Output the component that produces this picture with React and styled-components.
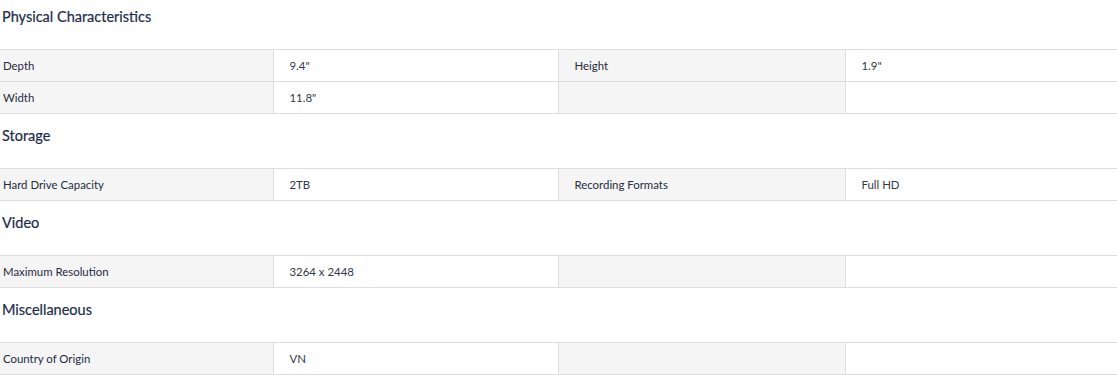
import styled, { createGlobalStyle } from "styled-components";

const GlobalStyle = createGlobalStyle`
  body {
    margin: 0;
    background: #fff;
    font-family: "Lato", "Liberation Sans", sans-serif;
  }
`;

const specs = [
  {
    title: "Physical Characteristics",
    rows: [
      ["Depth", "9.4\"", "Height", "1.9\""],
      ["Width", "11.8\"", "", ""],
    ],
  },
  {
    title: "Storage",
    rows: [["Hard Drive Capacity", "2TB", "Recording Formats", "Full HD"]],
  },
  {
    title: "Video",
    rows: [["Maximum Resolution", "3264 x 2448", "", ""]],
  },
  {
    title: "Miscellaneous",
    rows: [["Country of Origin", "VN", "", ""]],
  },
];

const App = () => {
  return (
    <>
      <GlobalStyle />
      <Wrapper>
        {specs.map((group) => (
          <Section key={group.title}>
            <Title>{group.title}</Title>
            <SpecTable>
              <colgroup>
                <col style={{ width: 273 }} />
                <col style={{ width: 285 }} />
                <col style={{ width: 287 }} />
                <col />
              </colgroup>
              <tbody>
                {group.rows.map((row, i) => (
                  <tr key={i}>
                    <Label $first>{row[0]}</Label>
                    <Value>{row[1]}</Value>
                    <Label>{row[2]}</Label>
                    <Value>{row[3]}</Value>
                  </tr>
                ))}
              </tbody>
            </SpecTable>
          </Section>
        ))}
      </Wrapper>
    </>
  );
};

const Wrapper = styled.div`
  width: 1117px;
  display: flex;
  flex-direction: column;
`;

const Section = styled.section`
  padding-top: 12px;
  &:first-child {
    padding-top: 7px;
  }
`;

const Title = styled.h3`
  margin: 0 0 22px 2px;
  font-size: 14.5px;
  line-height: 20px;
  font-weight: 400;
  color: #1c2b4b;
  -webkit-text-stroke: 0.2px #1c2b4b;
`;

const SpecTable = styled.table`
  width: 100%;
  border-collapse: collapse;
  table-layout: fixed;
  border-top: 1px solid #dedede;
  border-bottom: 1px solid #dedede;
  font-size: 11.4px;

  tr + tr td {
    border-top: 1px solid #dedede;
  }
  td + td {
    border-left: 1px solid #dedede;
  }
`;

const Label = styled.td`
  height: 32px;
  padding: 0 0 0 ${({ $first }) => ($first ? "3px" : "16px")};
  box-sizing: border-box;
  background: #f5f5f5;
  color: #262b40;
  vertical-align: middle;
`;

const Value = styled.td`
  height: 32px;
  padding: 0 0 0 16px;
  box-sizing: border-box;
  background: #fff;
  color: #333849;
  vertical-align: middle;
`;

export default App;
